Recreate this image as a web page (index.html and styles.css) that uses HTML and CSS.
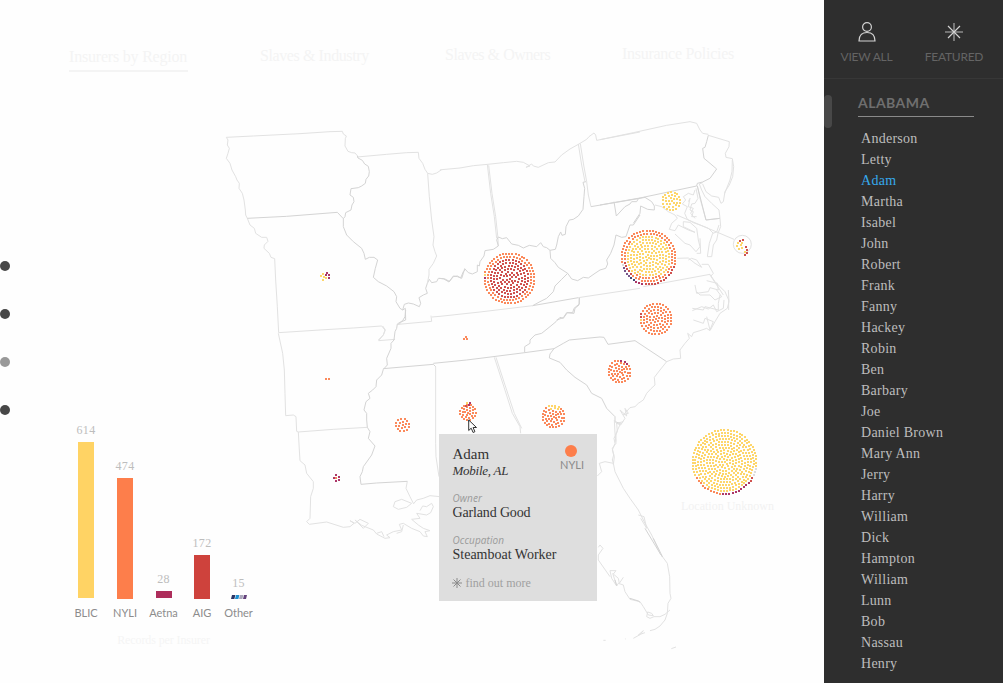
FILE: index.html
```html
<!DOCTYPE html>
<html lang="en">
<head>
<meta charset="utf-8">
<title>Insurers by Region</title>
<link rel="stylesheet" href="styles.css">
</head>
<body>
<div class="app">
<main class="stage">
  <svg class="map" width="824" height="683" viewBox="0 0 824 683">
    <g class="borders">
      <g transform="translate(220 120) scale(.33333)">
        <path class="light" d="M19,52L100,48 240,41 330,35 367,34 370,42 379,48 376,56 375,78 384,94 395,98 405,99 412,107M19,52L24,60 22,75 28,85 24,100 19,115 30,130 36,150 47,170 51,180 58,190 57,205 67,220 72,240 76,270 77,285 82,295 90,315 103,325 107,340 125,352 140,352 144,364 133,375 132,385 148,400 153,412 164,416 167,480 172,560 176,638M412,111L500,103 560,98 595,97 597,115 608,130 615,148 623,160 637,163 650,159 665,149 660,150"/>
        <path d="M412,107L414,114 427,121 434,132 445,139 448,155 446,168 438,178 436,190 425,198 415,203 393,206 390,225 400,232 402,245 396,255 393,270 377,278 375,290 370,296 352,277 200,289 82,295"/>
        <path d="M370,296L370,320 380,345 400,365 425,385 432,400 436,418 448,412 462,412 473,420 466,445 460,472 475,485 500,498 522,515 530,530 528,545 540,565 548,570 556,565 557,600 545,605 535,615"/>
        <path d="M548,570L553,553 565,549 580,552 598,560 602,550 597,533 610,525 622,520 617,505 622,490 628,478 635,488 650,485 655,475 670,476 687,486 700,470 712,468 722,474 730,455 738,447"/>
        <path class="light" d="M623,160L628,230 635,300 642,350 639,375 645,395 650,408 640,430 627,448 627,465 622,490M176,638L300,630 400,624 485,618 495,630 490,645 475,660"/>
      </g>
      <g transform="translate(440 130) scale(.33333)">
        <path class="light" d="M5,119L60,114 100,107 143,103 190,98 230,94 250,97 270,108 258,112 275,102 280,108 295,112 325,98 345,96 365,75 390,57 417,42 440,28 447,20 462,9 467,15 470,31 600,6"/>
        <path class="light" d="M142,103L152,190 163,260 170,325M146,106L156,190 167,260 174,325 175,348M415,42L425,105 435,155M421,41L431,105 440,155 445,195 453,230"/>
        <path d="M453,230L523,218 600,205M438,155L429,157 434,175 432,200 429,238 415,258 400,268 388,270 378,290 376,313 366,316 362,306 355,320 350,345 346,358 330,361 320,353 310,350 302,338 290,350 268,346 250,354 235,346 215,342 200,323 187,326 175,321 170,330 175,348 160,358 135,362 132,378 120,395 118,408 112,405 112,425 97,432 85,428 74,416 70,430 65,445 53,440 40,438 28,454 15,447 -2,445"/>
        <path d="M330,361L332,385 345,398 355,412 383,430 365,448 345,468 340,485 320,505 300,515 278,527M383,430L395,447 413,452 430,442 445,444 465,430 480,420 497,415 503,402 500,390 512,370 522,345 528,315 545,322 558,320 570,285 580,285 600,255"/>
        <path d="M278,527L415,503M418,503L417,525 405,535 402,550 380,548 370,563 350,570"/>
        <path class="light" d="M415,503L600,475M-24,561L0,559 120,546 278,527"/>
      </g>
      <g transform="translate(600 110) scale(.33333)">
        <path class="light" d="M0,89L100,68 200,46 270,35 290,40 300,60 308,70 325,73M325,76L388,95 387,110 376,130 378,142 397,146 401,170 398,200 388,225 375,245 370,275 363,280 356,262 335,258 318,245 308,222"/>
        <path class="light" d="M397,150L396,185 390,210 374,250M292,228L300,265 318,330M318,330L360,325 357,300 335,280 315,260 305,240 298,222 308,218"/>
        <path d="M0,285L120,264 290,228 292,220 308,216 330,205 350,177 330,160 312,145 308,115 315,112 320,95 325,76M292,228L318,330 360,325M42,275L49,318 75,290 90,282 95,275 110,275 115,266 135,262 155,275 163,288 163,300 143,298 122,288 120,310 100,340"/>
        <path class="light" d="M165,285L185,290 205,305 225,315 232,325 215,340 208,358 225,362 235,345 265,360 285,367 250,350 250,335 270,337 290,355 295,390 300,410 288,425 270,405 255,400 225,372M285,240L280,255 265,250 250,260 257,270 247,282 262,290 254,310 262,328 280,338 300,345 325,355 340,370M288,235L294,265 285,280 275,282 270,300 280,305 275,320 290,320M360,325L362,350 354,370 350,390 340,405 335,440 322,440 328,400 338,370 350,366 357,345M232,445L265,444 285,460 305,472 290,450 275,445 265,450M305,463L325,463 340,490 333,498M265,275L270,265 265,290 280,295 272,310 285,325M300,385L302,430 290,430"/>
        <path class="light" d="M130,530L330,493 345,515 375,545 386,570 386,600M285,525L290,550 325,545 330,533 355,540 352,520 320,512M330,495L350,525 370,555M277,602L305,590 325,597 340,585 350,605 370,595 372,570M230,315L402,388"/>
        <circle class="light" cx="427" cy="403" r="27"/>
      </g>
      <g transform="translate(260 310) scale(.33333)">
        <path class="light" d="M55,70L68,130 73,180 75,250 77,317 100,315 108,320 110,364 115,366 118,420 120,452 135,465 140,490 160,515 160,535 152,560 150,625 140,635 148,643 200,636 250,652 270,650 282,640 270,632 285,640 300,628 325,640 310,655 285,630 305,646 340,660 350,672 375,685 390,683 380,675 400,665 425,660 418,643 430,640 455,655 480,665 490,678 502,680 495,665 510,662 490,655 475,645 455,628 480,625 470,610 500,615 512,608 520,590 515,580 500,590 488,588 480,602M400,590L405,575 425,568 455,580 440,592 415,598 400,590M460,582L470,570 490,565 510,557 540,560M350,670L365,665 372,680M430,645L425,665 410,670"/>
        <path class="light" d="M368,48L376,60 370,75 356,92 405,88M115,366L220,358 322,352M442,514L438,535 450,560 460,580M527,170L527,400 528,440 537,500M415,43L515,34 513,17"/>
        <path d="M437,0L435,20 428,32 412,42 410,55 405,65 402,90 393,100 393,115 380,145 382,165 370,178 365,195 350,210 348,230 338,240 325,250 330,265 318,275 312,300 320,310 320,330 322,352 330,365 325,385 345,408 335,435 310,470 307,485 300,500 303,523 350,519 442,514M370,176L450,169 520,163 527,170M520,160L620,150 660,145"/>
      </g>
      <g transform="translate(480 290) scale(.33333)">
        <path d="M298,24L298,42 282,55 278,68 262,68 250,85 240,82 228,95 210,110 185,130 165,135 150,150 150,160 134,170 134,188M0,205L134,188 222,176 250,160 268,150 360,141 372,142 384,163 465,152 560,215M222,176L210,192 208,204 240,217 260,240 285,262 320,285 335,310 365,325 380,355 405,380 405,395 420,400"/>
        <path class="light" d="M745,0L747,35 742,55 720,70 705,95 690,122 680,115 660,122 640,128 635,140 623,130 628,145 615,160 600,180 602,205 580,207 560,215 540,240 523,262 525,285 512,297 500,310 490,330 475,340 465,350 450,353 430,375 445,370 435,355 440,378 420,360 435,385 422,405 410,400 412,425 402,445 405,460 397,480 403,500 400,525M408,400L422,400 408,430 408,455M400,520L375,515 358,520 365,545 352,558M43,202L70,285 97,370 120,410 122,430M48,202L75,285 103,370 125,415M650,5L660,15 690,15 705,30 725,20 710,0M637,55L670,60 675,50 715,60 715,40 720,15M640,90L670,100 675,85 700,95 690,120 680,80"/>
      </g>
      <g transform="translate(580 420) scale(.33333)">
        <path class="light" d="M130,5L110,10 103,0 105,40 108,70 97,85 101,105 97,120 100,130 105,155 130,205 150,235 175,270 195,310 215,345 240,400 262,430 269,470 270,520 273,535 264,550 262,580 255,600 240,618 225,628 210,632M195,638L175,645 190,632 180,644 160,655M135,656L137,657M70,661L77,661M274,686L288,681M270,570L255,583 240,590 222,590 210,595 200,590 203,576 215,580 220,587 205,585 190,560 180,545 150,538 135,515 130,495 115,490 110,498 95,475 90,452 108,452 100,462 115,475 118,490 130,472M98,460L110,497M90,470L55,420 55,405 69,385 60,375 55,382M175,285L192,290 200,325 182,295"/>
        <path d="M195,325L240,400 247,410 240,395 220,355M150,535L175,543 180,547M105,480L110,497"/>
      </g>
    </g>
    <g id="records" shape-rendering="crispEdges"></g>
  </svg>

  <nav class="tabs">
    <a class="tab tab-active">Insurers by Region</a>
    <a class="tab tab-industry">Slaves &amp; Industry</a>
    <a class="tab tab-owners">Slaves &amp; Owners</a>
    <a class="tab tab-policies">Insurance Policies</a>
  </nav>

  <div class="pager"><i></i><i></i><i class="current"></i><i></i></div>

  <section class="chart">
    <div class="bars">
      <div class="col"><span class="count">614</span><span class="bar blic"></span><span class="name">BLIC</span></div>
      <div class="col"><span class="count">474</span><span class="bar nyli"></span><span class="name">NYLI</span></div>
      <div class="col"><span class="count">28</span><span class="bar aetna"></span><span class="name">Aetna</span></div>
      <div class="col"><span class="count">172</span><span class="bar aig"></span><span class="name">AIG</span></div>
      <div class="col"><span class="count">15</span>
        <svg class="bar other" width="16" height="4" viewBox="0 0 16 4"><path fill="#2b3565" d="M1 0h3.400L3.400 4H0z"/><path fill="#1d8fd0" d="M5 0h3.400L7.400 4H4z"/><path fill="#a9a6ba" d="M9 0h3.400l-1 4H8z"/><path fill="#64427c" d="M13 0h3l-1 4h-3z"/></svg>
        <span class="name">Other</span></div>
    </div>
    <div class="caption">Records per Insurer</div>
  </section>

  <div class="unknown">Location Unknown</div>

  <aside class="tip">
    <div class="tip-head">
      <div><div class="tip-name">Adam</div><div class="tip-place">Mobile, AL</div></div>
      <div class="tip-insurer"><i></i><span>NYLI</span></div>
    </div>
    <div class="field"><span class="label">Owner</span><span class="value owner">Garland Good</span></div>
    <div class="field"><span class="label">Occupation</span><span class="value">Steamboat Worker</span></div>
    <div class="more"><svg width="10" height="10" viewBox="0 0 10 10"><path d="M5 0v10M0 5h10M1.5 1.5l7 7M8.5 1.5l-7 7"/></svg><span>find out more</span></div>
  </aside>
  <svg class="cursor" width="10" height="15" viewBox="0 0 10 15"><path fill="#fff" stroke="#333" stroke-width="1" d="M.7 1v10.5l2.5-2.3 1.9 4.3 1.8-.8L5.100 8.500h3.400z"/></svg>
</main>

<aside class="side">
  <div class="views">
    <div class="view all">
      <svg width="18" height="20" viewBox="0 0 18 20"><circle cx="9" cy="5" r="4.400"/><path d="M1 19c0-6 3.500-8.500 8-8.500s8 2.500 8 8.500z"/></svg>
      <span>VIEW ALL</span>
    </div>
    <div class="view featured">
      <svg width="18" height="20" viewBox="0 0 18 20"><path class="axis" d="M9 1v18M0 10h18"/><path d="M3 4l12 12M15 4L3 16"/></svg>
      <span>FEATURED</span>
    </div>
  </div>
  <div class="handle"></div>
  <div class="people">
    <h2>ALABAMA</h2>
    <ul>
      <li>Anderson</li><li>Letty</li><li class="on">Adam</li><li>Martha</li><li>Isabel</li><li>John</li><li>Robert</li><li>Frank</li><li>Fanny</li><li>Hackey</li><li>Robin</li><li>Ben</li><li>Barbary</li><li>Joe</li><li>Daniel Brown</li><li>Mary Ann</li><li>Jerry</li><li>Harry</li><li>William</li><li>Dick</li><li>Hampton</li><li>William</li><li>Lunn</li><li>Bob</li><li>Nassau</li><li>Henry</li>
    </ul>
  </div>
</aside>
</div>
<script src="dots.js"></script>
</body>
</html>
```
FILE: styles.css
```css
* { box-sizing: border-box; }
body { margin: 0; background: #fefefe; font-family: "Liberation Serif", serif; }
.app { display: flex; width: 1003px; height: 683px; overflow: hidden; }
.stage { position: relative; width: 824px; height: 683px; flex: none; }
.map { position: absolute; left: 0; top: 0; }
.borders path, .borders circle { fill: none; stroke: #d4d4d4; stroke-width: 1; vector-effect: non-scaling-stroke; stroke-linejoin: round; }
.borders .light { stroke: #e2e2e2; }
.tabs { position: relative; display: flex; padding: 47px 0 0 69px; height: 80px; font-size: 16px; line-height: 20px; color: #f4f4f4; white-space: nowrap; }
.tab-active { width: 119px; height: 25px; border-bottom: 2px solid #f4f4f4; letter-spacing: -.2px; }
.tab-industry { margin: -1px 0 0 72px; width: 185px; letter-spacing: -.4px; }
.tab-owners { margin-top: -2px; width: 177px; letter-spacing: -.45px; }
.tab-policies { margin-top: -3px; letter-spacing: -.27px; }
.pager { position: absolute; left: 0; top: 261px; display: flex; flex-direction: column; gap: 38px; }
.pager i { width: 10px; height: 10px; border-radius: 5px; background: #474747; }
.pager .current { background: #999; }
.chart { position: absolute; left: 66.5px; top: 420px; width: 194px; }
.bars { display: flex; align-items: flex-end; height: 200px; }
.col { width: 39px; display: flex; flex-direction: column; align-items: center; }
.col:nth-child(3) { width: 38px; }
.count { font-size: 12px; line-height: 14px; letter-spacing: .3px; color: #bdbdbd; margin-bottom: 5px; }
.bar { width: 16px; }
.name { font: 11px/14px Lato, sans-serif; color: #8c8c8c; margin-top: 7px; }
.blic { height: 156px; margin-bottom: 1px; background: #ffd364; }
.nyli { height: 121px; background: #fd7e4b; }
.aetna { height: 7px; margin-bottom: 1px; background: #ad2d5b; }
.aig { height: 44px; background: #ce423c; }
.col:nth-child(5) { width: 34px; }
.caption { margin-top: 12px; font-size: 12px; line-height: 16px; letter-spacing: -.1px; text-align: center; color: #f5f5f5; }
.unknown { position: absolute; left: 681px; top: 498px; font-size: 12px; line-height: 16px; color: #f2f2f2; white-space: nowrap; }
.tip { position: absolute; left: 439px; top: 434px; width: 158px; height: 167px; padding: 11px 13px 0 13.5px; background: #dedede; color: #333; }
.tip-head { display: flex; justify-content: space-between; }
.tip-name { font-size: 15px; line-height: 18px; }
.tip-place { font-size: 13px; line-height: 16px; font-style: italic; letter-spacing: -.25px; }
.tip-insurer { display: flex; flex-direction: column; align-items: center; font: 11px/14px Lato, sans-serif; color: #8b8b8b; }
.tip-insurer i { width: 12px; height: 12px; margin: 0 2px 1px 0; border-radius: 6px; background: #fd7e4b; }
.field { display: flex; flex-direction: column; margin-top: 12px; height: 30px; white-space: nowrap; }
.label { font: italic 10px/14px "Open Sans", sans-serif; color: #9a9a9a; letter-spacing: .1px; }
.value { font-size: 14px; line-height: 16px; }
.owner { letter-spacing: -.15px; }
.more { display: flex; gap: 4px; align-items: center; margin-top: 13px; margin-left: -1px; font-size: 12px; line-height: 14px; color: #a0a0a0; }
.more path { stroke: #8a8a8a; fill: none; stroke-width: 1; }
.cursor { position: absolute; left: 468px; top: 419px; }
.side { position: relative; flex: 1; background: #2e2e2e; }
.views { display: flex; height: 79px; border-bottom: 1px solid #373737; padding: 22px 0 0; }
.view { display: flex; flex-direction: column; align-items: center; gap: 7px; font: 12px/16px Lato, sans-serif; letter-spacing: -.25px; color: #646464; }
.all { width: 85px; }
.featured { width: 90px; }
.view path, .view circle { fill: none; stroke: #d2d2d2; stroke-width: 1.2; }
.view .axis { stroke: #8a8a8a; stroke-width: 1.6; }
.handle { position: absolute; left: 0; top: 95px; width: 8px; height: 33px; border-radius: 4px; background: #484848; }
.people { padding: 15px 0 0 34px; }
h2 { margin: 0; width: 116px; height: 23px; border-bottom: 1px solid #8a8a8a; font: 700 14px/17px Lato, sans-serif; color: #6f6f6f; letter-spacing: .45px; }
ul { list-style: none; margin: 11px 0 0 3px; padding: 0; font-size: 14px; letter-spacing: .27px; color: #bdbdbd; }
li { height: 21px; line-height: 21px; }
.on { color: #36a9ec; }
```
FILE: dots.js
```js
const Y = '#fed66b', O = '#fb8a5c', R = '#d0524f', P = '#ad3768', G = '#dddddd', V = '#77568c', N = '#3d4677';
const layer = document.getElementById('records');

function dot(x, y, color, size = 2) {
  const r = document.createElementNS('http://www.w3.org/2000/svg', 'rect');
  r.setAttribute('x', Math.round(x - 1));
  r.setAttribute('y', Math.round(y - 1));
  r.setAttribute('width', size);
  r.setAttribute('height', size);
  r.setAttribute('fill', color);
  layer.appendChild(r);
}

// Concentric rings of records; pick(radius, degrees) chooses the insurer colour.
function cluster(cx, cy, radius, pick, step = 3.1) {
  const rings = Math.round(radius / step);
  for (let k = 0; k <= rings; k++) {
    const r = radius * k / rings;
    const n = k ? Math.floor(2 * Math.PI * r / 3.15) : 1;
    for (let i = 0; i < n; i++) {
      const a = 2 * Math.PI * i / n + k * 0.7;
      const deg = (a * 180 / Math.PI) % 360;
      dot(cx + r * Math.cos(a), cy + r * Math.sin(a), pick(r, deg));
    }
  }
}

cluster(509.5, 278.5, 25, (r, d) => r > 24 && d > 175 && d < 182 ? P : r > 24 && d > 182 && d < 189 ? Y : r < 19 ? R : O);
cluster(648.5, 257.5, 27, (r, d) => {
  if (r > 25) {
    if (d > 15 && d < 100) return R;
    if (d >= 100 && d < 120) return P;
    if (d >= 120 && d < 132) return N;
    if (d >= 132 && d < 158) return V;
    if (d >= 158 && d < 166) return G;
    return O;
  }
  if (r > 22) return d > 130 && d < 170 ? R : O;
  return r > 20 && d > 55 && d < 130 ? O : Y;
});
cluster(671.5, 201, 9, () => Y);
cluster(656, 319, 15.5, (r, d) => r > 14 && d > 172 && d < 185 ? Y : r > 14 && d >= 185 && d < 202 ? R : O);
cluster(619.5, 371.5, 11, (r, d) => r > 10 && d > 275 && d < 325 ? P : O);
cluster(553.5, 416.5, 11, (r, d) => r > 7 && d > 245 && d < 305 ? Y : O);
cluster(402.5, 425, 6.5, (r, d) => r > 6 && d > 235 && d < 260 ? P : O, 2.9);
cluster(468, 412.500, 8, () => O);
cluster(724.5, 462, 32, (r, d) => {
  if (r < 31) return Y;
  if (d > 8 && d < 28) return G;
  if (d >= 28 && d < 40) return R;
  if (d >= 40 && d < 97) return P;
  if (d >= 97 && d < 152) return O;
  return Y;
}, 2.95);

[[321, 276, Y], [323, 274, Y], [324, 277, Y], [326, 278, Y], [323, 280, Y], [327, 273, P], [326, 275, P], [329, 275, P], [329, 278, P],
 [466, 337, O], [464, 339, O], [467, 339, O], [326, 379, O], [329, 379, O],
 [336, 475, P], [339, 477, P], [334, 478, P], [336, 478, O], [339, 480, P], [336, 481, P],
 [467, 403, Y], [470, 403, P], [469, 405, P], [466, 406, R],
 [740, 241, R], [743, 240, R], [738, 243, Y], [741, 245, Y], [737, 246, Y], [742, 243, Y], [739, 249, Y], [742, 248, Y], [746, 247, R], [747, 250, R], [747, 253, R], [745, 252, Y], [745, 255, R],
 [469, 421, '#3f9fe0']].forEach(([x, y, c]) => dot(x, y, c));
```
